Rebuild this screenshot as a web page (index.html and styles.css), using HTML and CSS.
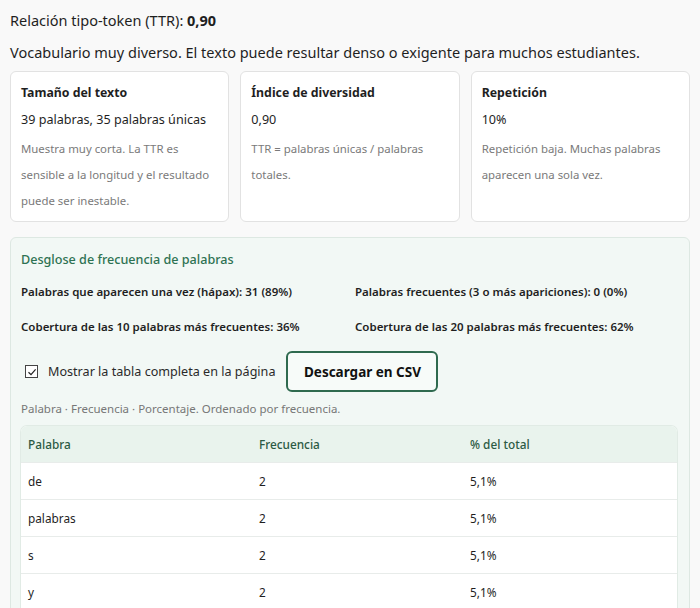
FILE: index.html
```html
<!DOCTYPE html>
<html lang="es">
<head>
    <meta charset="UTF-8">
    <meta name="viewport" content="width=device-width, initial-scale=1.0">
    <title>Análisis de vocabulario</title>
    <link rel="stylesheet" href="styles.css">
</head>
<body>
    <div class="container">
        <p class="ttr-line">Relación tipo-token (TTR): <strong>0,90</strong></p>
        <p class="ttr-summary">Vocabulario muy diverso. El texto puede resultar denso o exigente para muchos estudiantes.</p>

        <div class="cards">
            <div class="card">
                <h3>Tamaño del texto</h3>
                <p class="card-value">39 palabras, 35 palabras únicas</p>
                <p class="card-note">Muestra muy corta. La TTR es sensible a la longitud y el resultado puede ser inestable.</p>
            </div>
            <div class="card">
                <h3>Índice de diversidad</h3>
                <p class="card-value">0,90</p>
                <p class="card-note">TTR = palabras únicas / palabras totales.</p>
            </div>
            <div class="card">
                <h3>Repetición</h3>
                <p class="card-value">10%</p>
                <p class="card-note">Repetición baja. Muchas palabras aparecen una sola vez.</p>
            </div>
        </div>

        <div class="freq-panel">
            <h2>Desglose de frecuencia de palabras</h2>
            <div class="freq-stats">
                <p>Palabras que aparecen una vez (hápax): 31 (89%)</p>
                <p>Palabras frecuentes (3 o más apariciones): 0 (0%)</p>
                <p>Cobertura de las 10 palabras más frecuentes: 36%</p>
                <p>Cobertura de las 20 palabras más frecuentes: 62%</p>
            </div>
            <div class="freq-actions">
                <label class="show-table">
                    <input type="checkbox" checked>
                    <span class="check-box">
                        <svg width="10" height="10" viewBox="0 0 10 10"><path d="M1.5 5.2 L4 7.6 L8.6 2.4" fill="none" stroke="#222" stroke-width="1.2"/></svg>
                    </span>
                    Mostrar la tabla completa en la página
                </label>
                <button class="btn-csv">Descargar en CSV</button>
            </div>
            <p class="table-caption">Palabra · Frecuencia · Porcentaje. Ordenado por frecuencia.</p>
            <table class="freq-table">
                <thead>
                    <tr><th>Palabra</th><th>Frecuencia</th><th>% del total</th></tr>
                </thead>
                <tbody>
                    <tr><td>de</td><td>2</td><td>5,1%</td></tr>
                    <tr><td>palabras</td><td>2</td><td>5,1%</td></tr>
                    <tr><td>s</td><td>2</td><td>5,1%</td></tr>
                    <tr><td>y</td><td>2</td><td>5,1%</td></tr>
                    <tr><td>el</td><td>1</td><td>2,6%</td></tr>
                </tbody>
            </table>
        </div>
    </div>
</body>
</html>
```

FILE: styles.css
```css
body { font-family: "Noto Sans", "Open Sans", Arial, sans-serif; background-color: #f9f9f9; color: #1f1f1f; margin: 0; padding: 0 10px; }
.container { max-width: 680px; }
.ttr-line { font-size: 14.5px; margin: 0; padding-top: 9px; line-height: 22px; }
.ttr-line strong { font-weight: 700; }
.ttr-summary { font-size: 14.5px; margin: 10px 0 0; line-height: 22px; }
.cards { display: grid; grid-template-columns: repeat(3, 1fr); gap: 11px; margin-top: 8px; }
.card { box-sizing: border-box; height: 151px; background-color: #fff; border: 1px solid #e2e2e2; border-radius: 6px; padding: 12px 10px 8px; }
.card h3 { font-size: 12.3px; font-weight: 700; margin: 0; line-height: 18px; }
.card-value { font-size: 12.6px; margin: 8px 0 0; line-height: 19px; }
.card-note { font-size: 11.4px; color: #7a7a7a; margin: 7px 0 0; line-height: 26px; }
.freq-panel { margin-top: 15px; background-color: #f2f8f5; border: 1px solid #dde8e2; border-radius: 6px; padding: 12px 11px 0 10px; }
.freq-panel h2 { font-size: 12.6px; font-weight: 500; color: #2e7252; margin: 0; line-height: 20px; }
.freq-stats { display: grid; grid-template-columns: 334px 1fr; row-gap: 15px; margin-top: 12px; }
.freq-stats p { margin: 0; font-size: 11.5px; font-weight: 600; line-height: 20px; }
.freq-actions { display: flex; align-items: center; gap: 11px; margin-top: 14px; }
.show-table { display: flex; align-items: center; gap: 10px; font-size: 12.6px; color: #2a2a2a; padding-left: 4px; }
.show-table input { position: absolute; opacity: 0; width: 0; height: 0; margin: 0; }
.check-box { display: flex; align-items: center; justify-content: center; width: 11px; height: 11px; border: 1px solid #444; background-color: #fff; }
.btn-csv { font-family: inherit; font-size: 13.5px; font-weight: 700; color: #111; background-color: #f7fbf9; border: 2px solid #2f6a4f; border-radius: 6px; padding: 0 8px; height: 41px; width: 152px; white-space: nowrap; }
.table-caption { font-size: 11.5px; color: #777; margin: 9px 0 0; line-height: 16px; }
.freq-table { width: 656px; margin-top: 9px; border-collapse: collapse; background-color: #fff; font-size: 11.8px; border-radius: 6px 6px 0 0; overflow: hidden; box-shadow: 0 0 0 1px #e1ebe5; }
.freq-table th, .freq-table td { text-align: left; padding: 0 7px; height: 36px; border-bottom: 1px solid #e8ecea; }
.freq-table th { background-color: #e9f3ed; color: #2c5a44; font-weight: 500; }
.freq-table th:nth-child(1) { width: 217px; }
.freq-table th:nth-child(2) { width: 197px; }
```
